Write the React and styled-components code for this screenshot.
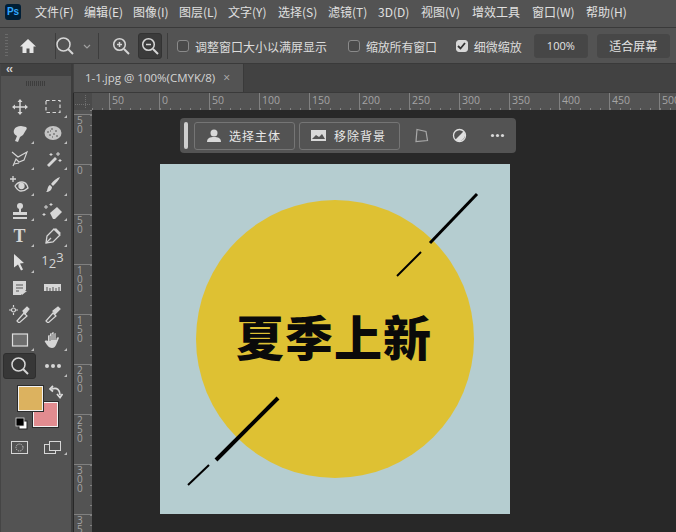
import React from 'react';
import styled, { createGlobalStyle } from 'styled-components';

const GlobalStyle = createGlobalStyle`
  html, body { margin: 0; padding: 0; background: #282828; }
  #root { width: 676px; height: 532px; overflow: hidden; }
  * { box-sizing: border-box; }
`;

const cjk = `"Noto Sans CJK SC", "Noto Sans", sans-serif`;

const Page = styled.div`
  width: 676px;
  height: 532px;
  display: flex;
  flex-direction: column;
  background: #535353;
  color: #dcdcdc;
  font-family: ${cjk};
  overflow: hidden;
`;

// top menu
const MenuBar = styled.div`
  height: 28px;
  flex: none;
  display: flex;
  align-items: center;
  padding: 0 0 4px 5px;
  border-bottom: 1px solid #3a3a3a;
`;

const LogoBox = styled.div`
  width: 16px;
  height: 16px;
  margin-right: 14px;
  border-radius: 3px;
  background: #001e36;
  color: #31a8ff;
  font: bold 10px/16px "Liberation Sans", sans-serif;
  text-align: center;
`;

const MenuItem = styled.span`
  font-size: 12px;
  line-height: 16px;
  white-space: nowrap;
  color: #e0e0e0;
  width: ${p => p.$w}px;
  flex: none;
`;

// options row
const OptionsBar = styled.div`
  height: 36px;
  flex: none;
  display: flex;
  align-items: center;
  padding-top: 1px;
  border-bottom: 1px solid #3a3a3a;
`;

const Grip = styled.div`
  width: 3px;
  height: 24px;
  margin: 0 9px 0 5px;
  background: repeating-linear-gradient(to bottom, #6a6a6a 0 1px, transparent 1px 3px);
`;

const Sep = styled.div`
  width: 1px;
  height: 26px;
  flex: none;
  background: #3d3d3d;
  margin-left: ${p => p.$l || 0}px;
  margin-right: ${p => p.$r || 0}px;
`;

const OptIcon = styled.div`
  width: ${p => p.$w || 24}px;
  height: 26px;
  flex: none;
  display: flex;
  align-items: center;
  justify-content: center;
  border-radius: 3px;
  margin-left: ${p => p.$l || 0}px;
  margin-right: ${p => p.$r || 0}px;
  background: ${p => (p.$active ? '#3b3b3b' : 'transparent')};
  border: 1px solid ${p => (p.$active ? '#333' : 'transparent')};
`;

const Check = styled.span`
  width: 12px;
  height: 12px;
  flex: none;
  border-radius: 3px;
  display: inline-flex;
  align-items: center;
  justify-content: center;
  margin-left: ${p => p.$l || 0}px;
  margin-right: 6px;
  border: 1px solid ${p => (p.$on ? '#d8d8d8' : '#8a8a8a')};
  background: ${p => (p.$on ? '#d8d8d8' : '#4a4a4a')};
`;

const OptLabel = styled.span`
  font-size: 12px;
  letter-spacing: ${p => p.$ls || 0}px;
  color: #dcdcdc;
  white-space: nowrap;
  flex: none;
`;

const ZoomValue = styled.div`
  width: 54px;
  height: 24px;
  flex: none;
  margin-left: 12px;
  border: 1px solid #474747;
  border-radius: 3px;
  background: #464646;
  font: 11px/22px "Open Sans", sans-serif;
  text-align: center;
  color: #e4e4e4;
`;

const FitButton = styled.div`
  width: 73px;
  height: 24px;
  flex: none;
  margin-left: 9px;
  border: 1px solid #474747;
  border-radius: 3px;
  background: #474747;
  font-size: 12px;
  line-height: 21px;
  text-align: center;
  color: #e4e4e4;
`;

// body
const Workspace = styled.div`
  flex: 1;
  display: flex;
  min-height: 0;
`;

const ToolPanel = styled.div`
  width: 73px;
  flex: none;
  background: #535353;
  border-right: 2px solid #3c3c3c;
  border-left: 1px solid #454545;
  display: flex;
  flex-direction: column;
`;

const PanelHead = styled.div`
  height: 12px;
  background: #424242;
  color: #d0d0d0;
  font: bold 12px/10px "Liberation Sans", sans-serif;
  padding-left: 5px;
  letter-spacing: -1px;
`;

const PanelGrip = styled.div`
  width: 20px;
  height: 5px;
  margin: 5px auto 0;
  background: repeating-linear-gradient(to right, #3d3d3d 0 1px, transparent 1px 2px);
`;

const ToolGrid = styled.div`
  display: grid;
  grid-template-columns: 33px 33px;
  grid-auto-rows: 25.9px;
  margin: 8px 0 0 2px;
`;

const ToolCell = styled.div`
  position: relative;
  display: flex;
  align-items: center;
  justify-content: center;
  border-radius: 3px;
  background: ${p => (p.$active ? '#373737' : 'transparent')};
  border: 1px solid ${p => (p.$active ? '#2e2e2e' : 'transparent')};
  &::after {
    content: '';
    display: ${p => (p.$corner ? 'block' : 'none')};
    position: absolute;
    right: 1px;
    bottom: 1px;
    border-style: solid;
    border-width: 0 0 3px 3px;
    border-color: transparent transparent #bdbdbd transparent;
  }
`;

const SwatchArea = styled.div`
  position: relative;
  height: 50px;
  margin-top: 5px;
`;

const Swatch = styled.div`
  position: absolute;
  left: ${p => p.$x}px;
  top: ${p => p.$y}px;
  width: 25px;
  height: 25px;
  background: ${p => p.$c};
  border: 1px solid #f2f2f2;
  outline: 1px solid #2c2c2c;
`;

const SwatchIcon = styled.div`
  position: absolute;
  left: ${p => p.$x}px;
  top: ${p => p.$y}px;
  line-height: 0;
`;

const ModeRow = styled.div`
  display: grid;
  grid-template-columns: 33px 33px;
  margin: 5px 0 0 2px;
  height: 18px;
`;

const Main = styled.div`
  flex: 1;
  min-width: 0;
  display: flex;
  flex-direction: column;
  background: #282828;
`;

const TabBar = styled.div`
  height: 29px;
  flex: none;
  background: #424242;
  border-bottom: 1px solid #3a3a3a;
  padding-left: 1px;
`;

const Tab = styled.div`
  width: 170px;
  height: 28px;
  background: #535353;
  border-right: 1px solid #3a3a3a;
  display: flex;
  align-items: center;
  padding-left: 11px;
  font: 11.5px/28px "Open Sans", sans-serif;
  color: #d4d4d4;
  white-space: nowrap;
`;

const TabClose = styled.span`
  margin-left: 8px;
  font-size: 12px;
  color: #b0b0b0;
`;

const RulerRow = styled.div`
  height: 17px;
  flex: none;
  display: flex;
  background: #535353;
  margin-left: 1px;
`;

const RulerCorner = styled.div`
  width: 18px;
  flex: none;
  background: #4a4a4a;
  position: relative;
  &::before {
    content: '';
    position: absolute;
    left: 11px;
    top: 2px;
    height: 13px;
    border-left: 1px dotted #6e6e6e;
  }
  &::after {
    content: '';
    position: absolute;
    top: 11px;
    left: 1px;
    width: 15px;
    border-top: 1px dotted #6e6e6e;
  }
`;

const HCell = styled.div`
  width: ${p => p.$w || 50}px;
  flex: none;
  padding-left: 2px;
  font: 10.5px/15px "Open Sans", sans-serif;
  color: #a4a4a4;
  border-left: ${p => (p.$blank ? 'none' : '1px solid #808080')};
  background: repeating-linear-gradient(to right, #808080 0 1px, transparent 1px 10px) left bottom / 100% 2px no-repeat;
  overflow: hidden;
`;

const Body = styled.div`
  flex: 1;
  display: flex;
  min-height: 0;
`;

const VRuler = styled.div`
  width: 18px;
  flex: none;
  margin-left: 1px;
  background: #535353;
  overflow: hidden;
`;

const VCell = styled.div`
  height: ${p => p.$h || 50}px;
  border-top: ${p => (p.$blank ? 'none' : '1px solid #808080')};
  padding: 1px 0 0 3px;
  background: repeating-linear-gradient(to bottom, #808080 0 1px, transparent 1px 10px) right top / 2px 100% no-repeat;
`;

const VNumber = styled.div`
  width: 7px;
  word-break: break-all;
  font: 10px/9px "Open Sans", sans-serif;
  color: #a4a4a4;
`;

const Canvas = styled.div`
  flex: 1;
  position: relative;
  background: #282828;
  padding: 54px 0 0 68px;
`;

const TaskBar = styled.div`
  position: absolute;
  left: 88px;
  top: 8px;
  width: 336px;
  height: 35px;
  background: #535353;
  border-radius: 4px;
  display: flex;
  align-items: center;
  padding-left: 4px;
`;

const TaskGrip = styled.div`
  width: 4px;
  height: 27px;
  flex: none;
  border-radius: 2px;
  background: #cfcfcf;
  margin-right: 6px;
`;

const TaskButton = styled.div`
  width: 101px;
  height: 28px;
  flex: none;
  margin-right: 2px;
  border: 1px solid #757575;
  border-radius: 3px;
  display: flex;
  align-items: center;
  padding-left: 11px;
  gap: 7px;
  font-size: 12px;
  letter-spacing: 1px;
  color: #e8e8e8;
  & + & {
    margin-left: 2px;
  }
`;

const TaskIcon = styled.div`
  width: 38px;
  flex: none;
  display: flex;
  justify-content: center;
  line-height: 0;
`;

const Artboard = styled.div`
  width: 350px;
  height: 350px;
  background: #b5cdd0;
  position: relative;
`;

const Sun = styled.div`
  position: absolute;
  left: 36px;
  top: 36px;
  width: 278px;
  height: 278px;
  border-radius: 50%;
  background: #dec133;
  display: flex;
  align-items: center;
  justify-content: center;
`;

const Headline = styled.div`
  font-family: ${cjk};
  font-weight: 900;
  font-size: 48px;
  line-height: 1;
  letter-spacing: 1px;
  color: #0a0a0a;
  white-space: nowrap;
  margin: -8px 0 0 -2px;
`;

const Strokes = styled.svg`
  position: absolute;
  left: 0;
  top: 0;
`;

const S = ({ w = 24, h = 24, children, fill = 'none', stroke = '#d6d6d6', sw = 1.5 }) => (
  <svg width={w} height={h} viewBox={`0 0 ${w} ${h}`} fill={fill} stroke={stroke} strokeWidth={sw}>{children}</svg>
);

const Magnifier = ({ sign, size = 20 }) => (
  <S w={20} h={20}>
    <circle cx="8.5" cy="8.5" r={size > 20 ? 6.5 : 5.8} />
    <path d="M13 13l5 5" strokeWidth="2" />
    {sign && <path d="M6 8.5h5" />}
    {sign === '+' && <path d="M8.5 6v5" />}
  </S>
);

const icons = {
  move: <S w={18} h={18}><path d="M9 2v14M2 9h14" /><path d="M9 1l-2.5 3h5zM9 17l-2.5-3h5zM1 9l3-2.5v5zM17 9l-3-2.5v5z" fill="#d6d6d6" stroke="none" /></S>,
  marquee: <S w={18} h={18} sw={1.2}><rect x="2" y="2.5" width="14" height="12" strokeDasharray="3.5 2.5" /></S>,
  lasso: <S w={18} h={18} sw={0}><path d="M3 6c1-3 4-4 7-4l5 1c1 1 1 2 0 3l-3 5-3 2-2 5-3-1 2-5C4 11 2 9 3 6z" fill="#d6d6d6" /></S>,
  blob: <S w={18} h={18} sw={0}><ellipse cx="9" cy="9" rx="8.500" ry="7" fill="#c4c4c4" /><path d="M3 8h2M7 5h2M11 7h2M5 11h2M9 10h2M12 12h2M8 13h1M6 7h1" stroke="#555" strokeWidth="1" /></S>,
  polyLasso: <S w={18} h={18} sw={1.1}><path d="M1 2l6 5 9-5-3 8-5 2-3-3-3 7" /><path d="M3 14l5-1" /></S>,
  wand: <S w={18} h={18} sw={0}><path d="M3 15l8-8 2 2-8 8z" fill="#d6d6d6" /><path d="M14 2v4M12 4h4M7 3v3M5.500 4.500h3M16 9v3M14.500 10.500h3" stroke="#d6d6d6" strokeWidth="1" /></S>,
  eye: <S w={22} h={18} sw={1.3}><path d="M1 3h6M4 0v6" /><path d="M6 10c2-3 4-4 7-4s5 2 6 6c-2 2-4 3-7 3s-4-2-6-5z" /><circle cx="12.500" cy="10" r="2.500" fill="#d6d6d6" /></S>,
  brush: <S w={18} h={18} sw={0}><path d="M16 1c-1 3-4 6-7 9l-2-2c2-3 6-6 9-7zM6 9l2 2c0 3-3 5-6 5 2-1 1-6 4-7z" fill="#d6d6d6" /></S>,
  stamp: <S w={18} h={18} sw={0}><circle cx="9" cy="4" r="3" fill="#d6d6d6" /><path d="M8 6h2v4h6v3H2v-3h6zM2 15h14v2H2z" fill="#d6d6d6" /></S>,
  eraser: <S w={22} h={18} sw={0}><path d="M8 11l7-6 5 5-7 7h-2z" fill="#d6d6d6" /><path d="M4 3v4M2 5h4M9 1v3M7.500 2.500h3M2 11v3M.5 12.500h3" stroke="#d6d6d6" strokeWidth="1" /></S>,
  pen: <S w={18} h={18} sw={1.3}><path d="M2 16l1-7 7-7 6 6-7 7z" /><path d="M2 16l5-5" /><path d="M11 2l5 5" strokeWidth="2.500" /></S>,
  arrow: <S w={16} h={18} sw={0}><path d="M2 1l10 9-4 .5 3 6-2 1-3-6-4 3z" fill="#e0e0e0" /></S>,
  sheet: <S w={18} h={18} sw={0}><path d="M2 2h13v9l-5 5H2z" fill="#d6d6d6" /><path d="M5 6h7M5 9h7M5 12h3" stroke="#555" strokeWidth="1" /><path d="M11 16v-4h5z" fill="#d6d6d6" /></S>,
  ruler: <S w={20} h={10} sw={0}><rect x="1" y="1" width="17" height="7" fill="#d6d6d6" /><path d="M4 4v4M7 5v3M10 4v4M13 5v3M16 4v4" stroke="#555" strokeWidth="1" /></S>,
  sampler: <S w={22} h={18} sw={1.2}><circle cx="4.500" cy="5" r="2" /><path d="M4.500 0v2M4.500 8v2M0 5h2M7 5h2" /><path d="M8 16l7-8 3 3-8 7z" /><path d="M14 6l4-4 2 2-4 5z" fill="#d6d6d6" /></S>,
  dropper: <S w={18} h={18} sw={1.2}><path d="M2 16l7-8 3 3-8 7z" /><path d="M9 6l5-4 2 2-5 5z" fill="#d6d6d6" /></S>,
  rect: <S w={18} h={16} sw={1.2}><rect x="1.500" y="2" width="15" height="12" fill="#6e6e6e" stroke="#dedede" /></S>,
  hand: <S w={18} h={18} sw={0}><path d="M4 10V5c0-1 2-1 2 0V3c0-1 2-1 2 0v-1c0-1 2-1 2 0v1c0-1 2-1 2 0v5c1-2 3-2 3-1l-3 7c-1 2-2 3-4 3-3 0-5-3-7-6-1-1 1-2 3-1z" fill="#d6d6d6" /><path d="M6 5v5M8 3v6M10 2v7M12 3v6" stroke="#555" strokeWidth=".8" /></S>,
  zoom: <Magnifier size={21} />,
  dots: <S w={18} h={6} sw={0}><g fill="#d6d6d6"><circle cx="3" cy="3" r="2" /><circle cx="9" cy="3" r="2" /><circle cx="15" cy="3" r="2" /></g></S>,
};

const ToolSlot = ({ name, corner, active }) => (
  <ToolCell $corner={corner} $active={active}>{icons[name]}</ToolCell>
);

const TextTool = styled.span`
  font: bold 18px/1 "Liberation Serif", serif;
  color: #d6d6d6;
`;

const CountTool = styled.span`
  font: 13px/1 "Open Sans", sans-serif;
  color: #d6d6d6;
  margin-top: -3px;
  sub, sup { font-size: 13px; line-height: 0; }
  sub { vertical-align: -3px; }
  sup { vertical-align: 3px; }
`;

const menus = [
  ['文件(F)', 49], ['编辑(E)', 49], ['图像(I)', 46], ['图层(L)', 49], ['文字(Y)', 50], ['选择(S)', 50],
  ['滤镜(T)', 50], ['3D(D)', 43], ['视图(V)', 51], ['增效工具', 60], ['窗口(W)', 54], ['帮助(H)', 40],
];

const hLabels = [50, 0, 50, 100, 150, 200, 250, 300, 350, 400, 450, 500];
const vLabels = [50, 0, 50, 100, 150, 200, 250, 300, 350];

export default function App() {
  return (
    <Page>
      <GlobalStyle />
      <MenuBar>
        <LogoBox>Ps</LogoBox>
        {menus.map(([t, w]) => <MenuItem key={t} $w={w}>{t}</MenuItem>)}
      </MenuBar>

      <OptionsBar>
        <Grip />
        <OptIcon $l={-1} $r={12}>
          <svg width="18" height="16" viewBox="0 0 18 16" fill="#e6e6e6"><path d="M9 1L1 8.500h2.500V15h4v-4.500h3V15h4V8.500H17z" /></svg>
        </OptIcon>
        <Sep $l={3} />
        <OptIcon $l={-3}><Magnifier size={21} /></OptIcon>
        <OptIcon $w={16} $l={2} $r={3}>
          <svg width="8" height="5" viewBox="0 0 8 5" fill="none" stroke="#a0a0a0" strokeWidth="1.200"><path d="M1 1l3 3 3-3" /></svg>
        </OptIcon>
        <Sep />
        <OptIcon $l={10} $r={4}><Magnifier sign="+" /></OptIcon>
        <OptIcon $l={1} $active><Magnifier sign="-" /></OptIcon>
        <Sep $l={5} />
        <Check $l={9} />
        <OptLabel>调整窗口大小以满屏显示</OptLabel>
        <Check $l={21} />
        <OptLabel $ls={-0.2}>缩放所有窗口</OptLabel>
        <Check $l={19} $on>
          <svg width="9" height="8" viewBox="0 0 9 8" fill="none" stroke="#333" strokeWidth="1.800"><path d="M1 4l2.500 2.500L8 1" /></svg>
        </Check>
        <OptLabel>细微缩放</OptLabel>
        <ZoomValue>100%</ZoomValue>
        <FitButton>适合屏幕</FitButton>
      </OptionsBar>

      <Workspace>
        <ToolPanel>
          <PanelHead>‹‹</PanelHead>
          <PanelGrip />
          <ToolGrid>
            <ToolSlot name="move" /><ToolSlot name="marquee" corner />
            <ToolSlot name="lasso" corner /><ToolSlot name="blob" corner />
            <ToolSlot name="polyLasso" corner /><ToolSlot name="wand" corner />
            <ToolSlot name="eye" corner /><ToolSlot name="brush" corner />
            <ToolSlot name="stamp" corner /><ToolSlot name="eraser" corner />
            <ToolCell $corner><TextTool>T</TextTool></ToolCell><ToolSlot name="pen" corner />
            <ToolSlot name="arrow" corner /><ToolCell><CountTool>1<sub>2</sub><sup>3</sup></CountTool></ToolCell>
            <ToolSlot name="sheet" /><ToolSlot name="ruler" />
            <ToolSlot name="sampler" /><ToolSlot name="dropper" />
            <ToolSlot name="rect" corner /><ToolSlot name="hand" corner />
            <ToolSlot name="zoom" active /><ToolSlot name="dots" corner />
          </ToolGrid>
          <SwatchArea>
            <Swatch $x={32} $y={18} $c="#e28c90" />
            <Swatch $x={17} $y={2} $c="#dcb25f" />
            <SwatchIcon $x={48} $y={1}>
              <svg width="14" height="14" viewBox="0 0 14 14" fill="none" stroke="#dcdcdc" strokeWidth="1.800"><path d="M3 4c5-2 8 1 8 6" /><path d="M4 1L1 4l3 2.500M8 9l3 3.500L13.500 9" /></svg>
            </SwatchIcon>
            <SwatchIcon $x={14} $y={33}>
              <svg width="13" height="13" viewBox="0 0 13 13"><rect x="4" y="4" width="8" height="8" fill="#fff" stroke="#222" /><rect x="1" y="1" width="8" height="8" fill="#000" stroke="#ddd" strokeWidth=".8" /></svg>
            </SwatchIcon>
          </SwatchArea>
          <ModeRow>
            <ToolCell>
              <svg width="18" height="14" viewBox="0 0 18 14" fill="none" stroke="#d6d6d6"><rect x=".5" y=".5" width="16" height="12" /><circle cx="8.500" cy="6.500" r="3.500" strokeDasharray="1 1" /></svg>
            </ToolCell>
            <ToolCell $corner>
              <svg width="18" height="14" viewBox="0 0 18 14" fill="none" stroke="#d6d6d6"><rect x=".5" y="3.500" width="11" height="9" /><rect x="5.500" y=".5" width="11" height="9" fill="#535353" /></svg>
            </ToolCell>
          </ModeRow>
        </ToolPanel>

        <Main>
          <TabBar>
            <Tab>1-1.jpg @ 100%(CMYK/8)<TabClose>×</TabClose></Tab>
          </TabBar>
          <RulerRow>
            <RulerCorner />
            <HCell $w={17} $blank />
            {hLabels.map((n, i) => <HCell key={i}>{n}</HCell>)}
          </RulerRow>
          <Body>
            <VRuler>
              <VCell $h={4} $blank />
              {vLabels.map((n, i) => (
                <VCell key={i}><VNumber>{n}</VNumber></VCell>
              ))}
            </VRuler>
            <Canvas>
              <TaskBar>
                <TaskGrip />
                <TaskButton>
                  <svg width="16" height="15" viewBox="0 0 16 15" fill="#d8d8d8"><circle cx="8" cy="5" r="3.500" /><path d="M1 14c0-4 3-5 7-5s7 1 7 5z" /></svg>
                  选择主体
                </TaskButton>
                <TaskButton>
                  <svg width="16" height="13" viewBox="0 0 16 13"><rect width="15" height="11" y="1" fill="#d8d8d8" /><path d="M1 10l4-4 3 2 3-3 3 5z" fill="#535353" /></svg>
                  移除背景
                </TaskButton>
                <TaskIcon>
                  <svg width="15" height="15" viewBox="0 0 15 15" fill="none" stroke="#a8a8a8" strokeWidth="1.200"><path d="M3 1.500l9 2 1.500 9-11.500 1z" /></svg>
                </TaskIcon>
                <TaskIcon>
                  <svg width="15" height="15" viewBox="0 0 15 15"><circle cx="7.500" cy="7.500" r="6" fill="none" stroke="#e0e0e0" strokeWidth="1.300" /><path d="M3.300 11.700A6 6 0 0 0 11.700 3.300z" fill="#e0e0e0" /></svg>
                </TaskIcon>
                <TaskIcon>
                  <svg width="15" height="5" viewBox="0 0 15 5" fill="#d8d8d8"><circle cx="2.500" cy="2.500" r="1.600" /><circle cx="7.500" cy="2.500" r="1.600" /><circle cx="12.500" cy="2.500" r="1.600" /></svg>
                </TaskIcon>
              </TaskBar>
              <Artboard>
                <Sun><Headline>夏季上新</Headline></Sun>
                <Strokes width="350" height="350" viewBox="0 0 350 350" stroke="#000">
                  <path d="M317 30L270 79" strokeWidth="3" />
                  <path d="M261 88L237 112" strokeWidth="2" />
                  <path d="M118 234L56 296" strokeWidth="4" />
                  <path d="M49 301L28 321" strokeWidth="2" />
                </Strokes>
              </Artboard>
            </Canvas>
          </Body>
        </Main>
      </Workspace>
    </Page>
  );
}
